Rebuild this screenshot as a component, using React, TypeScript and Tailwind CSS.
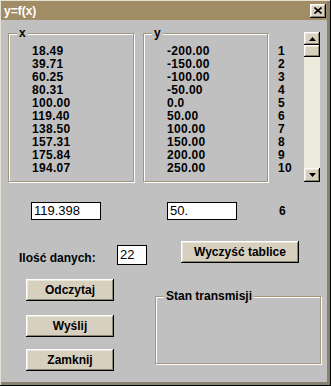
import React, { FC, ReactNode } from 'react';

const xs = ['18.49', '39.71', '60.25', '80.31', '100.00', '119.40', '138.50', '157.31', '175.84', '194.07'];
const ys = ['-200.00', '-150.00', '-100.00', '-50.00', '0.0', '50.00', '100.00', '150.00', '200.00', '250.00'];

const bevel =
  'bg-[#d7d0bf] shadow-[inset_-1px_-1px_#000,inset_1px_1px_#fff,inset_-2px_-2px_#8a8474,inset_2px_2px_#ebe7da]';

interface GroupProps {
  label: string;
  className: string;
  children?: ReactNode;
}

// etched group box, label sits over the top line
const Group: FC<GroupProps> = ({ label, className, children }) => (
  <div
    className={`relative border border-[#a39779] shadow-[inset_1px_1px_#fff,1px_1px_#fff] ${className}`}
  >
    <span className="absolute -top-[8px] left-[8px] bg-[#c0c0c0] px-[2px] text-[12px] leading-[14px] font-bold">
      {label}
    </span>
    {children}
  </div>
);

const Button: FC<{ label: string; className: string }> = ({ label, className }) => (
  <div className={`flex items-center justify-center text-[12px] font-bold ${bevel} ${className}`}>{label}</div>
);

const Arrow: FC<{ up?: boolean }> = ({ up }) => (
  <svg width="7" height="4" viewBox="0 0 7 4">
    <path d={up ? 'M3.5 0L7 4H0Z' : 'M0 0H7L3.5 4Z'} fill="#000" />
  </svg>
);

const App: FC = () => {
  return (
    <div className="w-[331px] h-[386px] bg-[#c0c0c0] text-black font-['Liberation_Sans',Arial,sans-serif] shadow-[inset_-1px_-1px_#000,inset_1px_1px_#e4dfd2,inset_-4px_-4px_#87826f] overflow-hidden">
      {/* title bar */}
      <div className="ml-[1px] mt-[1px] w-[326px] h-[19px] bg-[#a18d65] flex items-center justify-between">
        <span className="ml-[3px] text-white text-[12px] font-bold leading-none">y=f(x)</span>
        <div className={`mr-[1px] w-[16px] h-[14px] flex items-center justify-center ${bevel}`}>
          <svg width="8" height="7" viewBox="0 0 8 7">
            <path d="M0.5 0.5L7.5 6.5M7.5 0.5L0.5 6.5" stroke="#000" strokeWidth="1.6" />
          </svg>
        </div>
      </div>

      {/* lists */}
      <div className="flex items-start mt-[12px]">
        <Group label="x" className="ml-[8px] mt-[1px] w-[126px] h-[149px]">
          <div className="pl-[23px] pt-[11px] text-[12px] leading-[13px] tracking-[0.3px] font-bold">
            {xs.map((v) => (
              <div key={v}>{v}</div>
            ))}
          </div>
        </Group>
        <Group label="y" className="ml-[9px] mt-[1px] w-[125px] h-[149px]">
          <div className="pl-[23px] pt-[11px] text-[12px] leading-[13px] tracking-[0.3px] font-bold">
            {ys.map((v) => (
              <div key={v}>{v}</div>
            ))}
          </div>
        </Group>
        <div className="ml-[10px] w-[20px] pt-[13px] text-[12px] leading-[13px] tracking-[0.3px] font-bold">
          {ys.map((v, i) => (
            <div key={v}>{i + 1}</div>
          ))}
        </div>
        <div className="ml-[6px] w-[16px] h-[150px] bg-[#ece9dd] flex flex-col">
          <div className={`h-[13px] flex items-center justify-center ${bevel}`}>
            <Arrow up />
          </div>
          <div className={`h-[12px] ${bevel}`} />
          <div className="flex-1" />
          <div className={`h-[14px] flex items-center justify-center ${bevel}`}>
            <Arrow />
          </div>
        </div>
      </div>

      {/* current values */}
      <div className="flex items-center mt-[20px] h-[18px] text-[13px]">
        <div className="ml-[31px] w-[70px] h-[18px] bg-white border border-black pl-[2px] leading-[16px]">119.398</div>
        <div className="ml-[66px] w-[70px] h-[18px] bg-white border border-black pl-[2px] leading-[16px]">50.</div>
        <div className="ml-[42px] text-[12px] font-bold">6</div>
      </div>

      {/* count + clear */}
      <div className="flex items-start mt-[21px] h-[24px]">
        <div className="ml-[19px] w-[98px] mt-[10px] text-[12px] leading-[14px] font-bold">Ilość danych:</div>
        <div className="mt-[4px] w-[30px] h-[20px] bg-white border border-black pl-[2px] text-[13px] leading-[18px]">22</div>
        <Button label="Wyczyść tablice" className="ml-[34px] w-[118px] h-[22px]" />
      </div>

      {/* actions + status */}
      <div className="flex items-start mt-[14px]">
        <div className="ml-[26px] w-[88px] flex flex-col">
          <Button label="Odczytaj" className="h-[22px]" />
          <Button label="Wyślij" className="h-[22px] mt-[14px]" />
          <Button label="Zamknij" className="h-[22px] mt-[12px]" />
        </div>
        <Group label="Stan transmisji" className="ml-[41px] mt-[17px] w-[166px] h-[68px]" />
      </div>
    </div>
  );
};

export default App;
